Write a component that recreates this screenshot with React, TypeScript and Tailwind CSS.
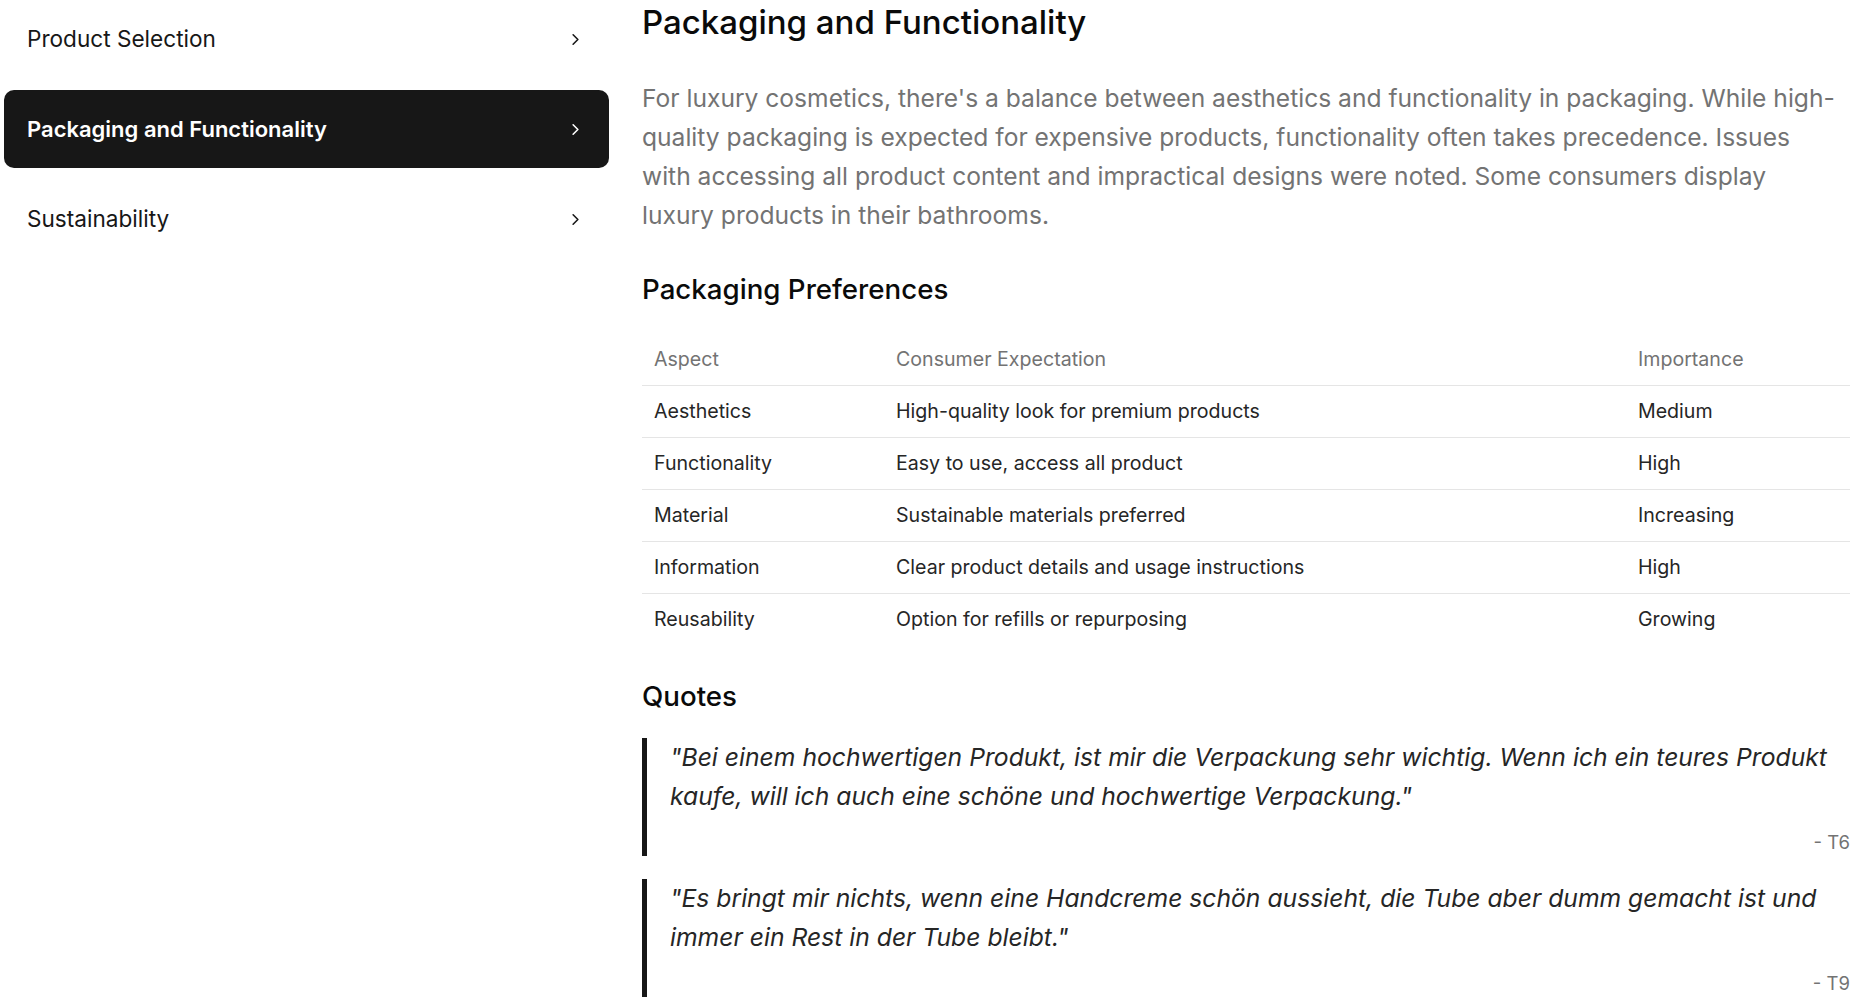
import { ChevronRight } from 'lucide-react';

type Row = { aspect: string; expectation: string; importance: string };
type Quote = { text: string; source: string };

const NAV = ['Product Selection', 'Packaging and Functionality', 'Sustainability'];
const ACTIVE = 'Packaging and Functionality';

const ROWS: Row[] = [
  { aspect: 'Aesthetics', expectation: 'High-quality look for premium products', importance: 'Medium' },
  { aspect: 'Functionality', expectation: 'Easy to use, access all product', importance: 'High' },
  { aspect: 'Material', expectation: 'Sustainable materials preferred', importance: 'Increasing' },
  { aspect: 'Information', expectation: 'Clear product details and usage instructions', importance: 'High' },
  { aspect: 'Reusability', expectation: 'Option for refills or repurposing', importance: 'Growing' },
];

const QUOTES: Quote[] = [
  {
    text: '"Bei einem hochwertigen Produkt, ist mir die Verpackung sehr wichtig. Wenn ich ein teures Produkt kaufe, will ich auch eine schöne und hochwertige Verpackung."',
    source: '- T6',
  },
  {
    text: '"Es bringt mir nichts, wenn eine Handcreme schön aussieht, die Tube aber dumm gemacht ist und immer ein Rest in der Tube bleibt."',
    source: '- T9',
  },
];

export default function App() {
  return (
    <div className="flex h-[1004px] overflow-hidden bg-white font-['Inter',sans-serif] text-[#171717]">
      {/* Sidebar */}
      <aside className="w-[609px] shrink-0 pl-[4px] flex flex-col gap-[12px]">
        {NAV.map(item => {
          const isActive = item === ACTIVE;
          return (
            <button
              key={item}
              className={`h-[78px] flex items-center justify-between pl-[23px] pr-[24px] rounded-[10px] text-left ${
                isActive ? 'bg-[#171717] text-white font-semibold text-[22px]' : 'text-[#171717] font-normal text-[22.6px]'
              }`}
            >
              <span>{item}</span>
              <ChevronRight size={19} strokeWidth={2} />
            </button>
          );
        })}
      </aside>

      {/* Main content */}
      <main className="flex-1 ml-[33px] mr-[13px]">
        <h1 className="text-[33px] leading-[45px] font-medium text-[#0a0a0a]">Packaging and Functionality</h1>

        <p className="mt-[34px] pr-[10px] text-[24.6px] leading-[39px] text-[#737373]">
          For luxury cosmetics, there's a balance between aesthetics and functionality in packaging. While high-quality
          packaging is expected for expensive products, functionality often takes precedence. Issues with accessing all
          product content and impractical designs were noted. Some consumers display luxury products in their bathrooms.
        </p>

        <h2 className="mt-[36px] text-[27.7px] leading-[36px] font-medium text-[#0a0a0a]">Packaging Preferences</h2>

        <table className="mt-[27px] w-full border-collapse text-[19.6px] leading-[27px]">
          <thead>
            <tr className="border-b border-[#e5e5e5]">
              <th className="w-[242px] px-[12px] py-[12px] text-left font-normal text-[#737373]">Aspect</th>
              <th className="w-[742px] px-[12px] py-[12px] text-left font-normal text-[#737373]">Consumer Expectation</th>
              <th className="px-[12px] py-[12px] text-left font-normal text-[#737373]">Importance</th>
            </tr>
          </thead>
          <tbody className="text-[#262626]">
            {ROWS.map((row, idx) => (
              <tr key={row.aspect} className={idx < ROWS.length - 1 ? 'border-b border-[#e5e5e5]' : ''}>
                <td className="px-[12px] py-[12px]">{row.aspect}</td>
                <td className="px-[12px] py-[12px]">{row.expectation}</td>
                <td className="px-[12px] py-[12px]">{row.importance}</td>
              </tr>
            ))}
          </tbody>
        </table>

        <h2 className="mt-[33px] text-[27.7px] leading-[36px] font-medium text-[#0a0a0a]">Quotes</h2>

        <div className="mt-[24px] flex flex-col gap-[23px]">
          {QUOTES.map(q => (
            <blockquote key={q.source} className="border-l-[5px] border-[#171717] pl-[23px] pb-[2px]">
              <p className="text-[24.7px] leading-[39px] italic text-[#262626]">{q.text}</p>
              <p className="mt-[14px] text-right text-[18.5px] leading-[24px] text-[#737373]">{q.source}</p>
            </blockquote>
          ))}
        </div>
      </main>
    </div>
  );
}
